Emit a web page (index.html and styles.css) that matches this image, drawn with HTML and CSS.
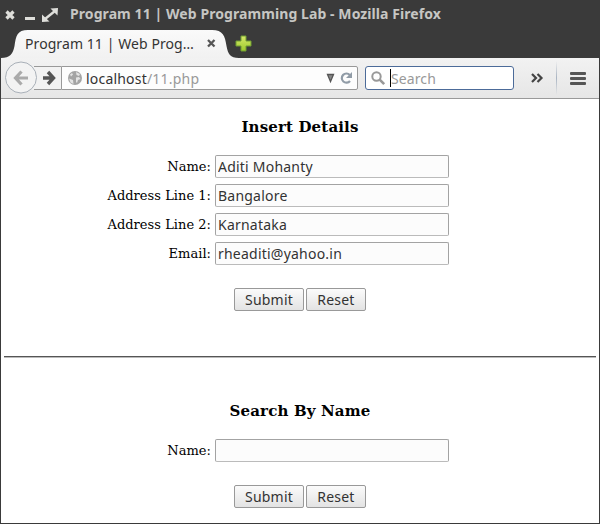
FILE: index.html
```html
<!DOCTYPE html>
<html lang="en">
<head>
<meta charset="utf-8">
<title>Program 11 | Web Programming Lab - Mozilla Firefox</title>
<link rel="stylesheet" href="styles.css">
</head>
<body>
<div class="window">
  <header class="titlebar">
    <svg class="window-controls" width="60" height="28" viewBox="0 0 60 28">
      <path d="M6.500 10.500l7 7M13.500 10.500l-7 7" stroke="#dededa" stroke-width="3.200"/>
      <path d="M25 17.500h10" stroke="#dededa" stroke-width="3"/>
      <path d="M45 18l10-8" stroke="#dededa" stroke-width="2.400"/>
      <path d="M50.500 7.500l7.500-.5-.5 7.500zM42 13.500v7.500l7.500-.5z" fill="#dededa"/>
    </svg>
    <span class="window-title">Program 11 | Web Programming Lab - Mozilla Firefox</span>
  </header>
  <div class="tabstrip">
    <div class="tab">
      <svg class="tab-shape" width="240" height="29" viewBox="0 0 240 29">
        <defs><linearGradient id="tabfill" x2="0" y2="1"><stop stop-color="#fafafa"/><stop offset="1" stop-color="#f1f1f1"/></linearGradient></defs>
        <path d="M1 29C10 29 13 25 14.500 17C16 7 17 1 28 1H212C223 1 225 7 226.500 17C228 25 230 29 239 29Z" fill="url(#tabfill)"/>
      </svg>
      <span class="tab-label">Program 11 | Web Prog…</span>
      <svg class="tab-close" width="9" height="9" viewBox="0 0 9 9"><path d="M1 1l6.500 6.500M7.500 1L1 7.500" stroke="#555" stroke-width="2.300"/></svg>
    </div>
    <svg class="new-tab" width="17" height="17" viewBox="0 0 17 17">
      <defs><linearGradient id="plusfill" x2="0" y2="1"><stop stop-color="#d6e86b"/><stop offset="1" stop-color="#9dc92b"/></linearGradient></defs>
      <path d="M6 1h5v5h5v5h-5v5H6v-5H1V6h5z" fill="url(#plusfill)" stroke="#6f9c32"/>
    </svg>
  </div>
  <nav class="toolbar">
    <div class="history">
      <svg width="56" height="34" viewBox="0 0 56 34">
        <path d="M25 5.500H56V28.500H25z" fill="#f2f2f2"/>
        <path d="M29 5.500H56M29 28.500H56" stroke="#999"/>
        <circle cx="16" cy="16.500" r="15.500" fill="#f3f3f3" stroke="#a9b0b8"/>
        <path d="M23 17H11M16.500 10.500L10.500 17l6 6.500" fill="none" stroke="#aaa" stroke-width="3.200"/>
        <path d="M38 17h10M43 11l5.500 6-5.500 6" fill="none" stroke="#555" stroke-width="3.400"/>
      </svg>
    </div>
    <div class="address">
      <svg class="globe" width="14" height="14" viewBox="0 0 14 14">
        <circle cx="7" cy="7" r="7" fill="#a4a4a4"/>
        <path d="M8 1l4 2-1 2-2.500-1zM8 6.500l3-.5 1.500 2-2.500 1-1 3-1-1zM1 7.500l4 1.500.5 4-3-1.500zM2 3.500l2-1.500 1 1.500-2 2z" fill="#e3e3e3"/>
      </svg>
      <span class="url">localhost<span class="path">/11.php</span></span>
      <svg class="address-actions" width="29" height="16" viewBox="0 0 29 16">
        <path d="M3.500 4.500h6l-3 7z" fill="#888" stroke="#555" stroke-width="1.300"/>
        <path d="M25.800 5A4.600 4.600 0 1 0 26 11" fill="none" stroke="#919ca7" stroke-width="2.200"/>
        <path d="M28 2v6h-6z" fill="#919ca7"/>
      </svg>
    </div>
    <div class="search">
      <svg class="magnifier" width="15" height="15" viewBox="0 0 15 15"><circle cx="5.500" cy="5.500" r="4.200" fill="none" stroke="#999" stroke-width="2"/><path d="M8.700 8.700l4.500 4.500" stroke="#999" stroke-width="2.600"/></svg>
      <span class="caret"></span><span class="placeholder">Search</span>
    </div>
    <svg class="overflow" width="13" height="10" viewBox="0 0 13 10"><path d="M1 1l4 4-4 4M6.500 1l4 4-4 4" fill="none" stroke="#444" stroke-width="2.200"/></svg>
    <span class="separator"></span>
    <span class="menu"><i></i><i></i><i></i></span>
  </nav>
  <main class="page">
    <form class="insert-form">
      <h3>Insert Details</h3>
      <div class="fields">
        <label for="name">Name:</label><input id="name" value="Aditi Mohanty">
        <label for="line1">Address Line 1:</label><input id="line1" value="Bangalore">
        <label for="line2">Address Line 2:</label><input id="line2" value="Karnataka">
        <label for="email">Email:</label><input id="email" value="rheaditi@yahoo.in">
      </div>
      <div class="buttons"><button type="button" class="submit">Submit</button><button type="button" class="reset">Reset</button></div>
    </form>
    <hr>
    <form class="search-form">
      <h3>Search By Name</h3>
      <div class="fields">
        <label for="query">Name:</label><input id="query">
      </div>
      <div class="buttons"><button type="button" class="submit">Submit</button><button type="button" class="reset">Reset</button></div>
    </form>
  </main>
</div>
</body>
</html>
```
FILE: styles.css
```css
* { box-sizing: border-box; }
body { margin: 0; background: #3a3a3a; overflow: hidden; }
svg { display: block; flex: none; }
.window {
  width: 600px; height: 524px; display: flex; flex-direction: column;
  background: #3a3a3a; font-family: "Noto Sans", sans-serif; font-size: 14px; color: #333;
}
.titlebar { height: 29px; display: flex; align-items: center; gap: 10px; }
.window-title { font-weight: bold; font-size: 14px; line-height: 26px; padding-bottom: 2px; color: #c6c6c3; letter-spacing: 0.08px; white-space: nowrap; }
.tabstrip { height: 29px; display: flex; align-items: center; }
.tab { position: relative; width: 235px; height: 29px; display: flex; align-items: center; padding-left: 25px; }
.tab-shape { position: absolute; left: 0; top: 0; }
.tab-label { position: relative; width: 182px; white-space: nowrap; letter-spacing: 0.08px; }
.tab-close { position: relative; }
.new-tab { position: relative; }
.toolbar {
  height: 41px; margin: 0 1px; padding: 0 12px 0 4px; display: flex; align-items: center;
  background: linear-gradient(#f2f2f2, #e6e6e6); border-bottom: 1px solid #999;
}
.address {
  width: 297px; height: 24px; padding: 0 4px 0 6px; display: flex; align-items: center;
  background: #fdfdfd; border: 1px solid #999; border-radius: 0 2px 2px 0;
}
.url { margin-left: 4px; letter-spacing: 0.2px; }
.path { color: #999; }
.address-actions { margin-left: auto; }
.search {
  width: 149px; height: 24px; margin-left: 7px; padding-left: 5px; display: flex; align-items: center;
  background: #fff; border: 1px solid #4c6b99; border-radius: 3px;
}
.caret { width: 1px; height: 18px; margin-left: 4px; background: #000; }
.placeholder { color: #999; letter-spacing: 0.1px; }
.overflow { margin-left: 17px; }
.separator { width: 1px; height: 34px; margin: 0 13px 0 12px; background: linear-gradient(transparent, #a9b4c2, transparent); }
.menu { width: 16px; display: flex; flex-direction: column; gap: 2px; }
.menu i { height: 3px; background: #555; border-radius: 1px; }
.page {
  flex: 1; margin: 0 1px 1px; padding: 19px 3px 0; background: #fff; color: #000;
  font-family: "DejaVu Serif", serif; font-size: 13px;
}
h3 { margin: 0; height: 18px; line-height: 18px; font-size: 15px; text-align: center; letter-spacing: 0.15px; }
.fields {
  display: grid; grid-template-columns: 207px 234px; column-gap: 4px; row-gap: 6px;
  padding-top: 19px;
}
label { line-height: 23px; text-align: right; white-space: nowrap; letter-spacing: 0.03px; }
input {
  display: block; width: 234px; height: 23px; padding: 0 2px; margin: 0;
  background: #fcfcfc; border: 1px solid #a3a3a3; border-bottom-color: #bbb; border-radius: 2px;
  font: 14px "Noto Sans", sans-serif; letter-spacing: 0.22px; color: #333; outline: 0;
}
.buttons { display: flex; justify-content: center; gap: 2px; padding-top: 23px; }
button {
  height: 23px; padding: 0; margin: 0; border: 1px solid #999; border-radius: 2px;
  background: linear-gradient(#fbfbfb, #e3e3e3); font: 14px "Noto Sans", sans-serif; letter-spacing: 0.2px; color: #333;
}
.submit { width: 70px; }
.reset { width: 60px; }
hr { height: 2px; margin: 45px 0 44px; border: 0; border-top: 1px solid #555; background: #bbb; }
```
